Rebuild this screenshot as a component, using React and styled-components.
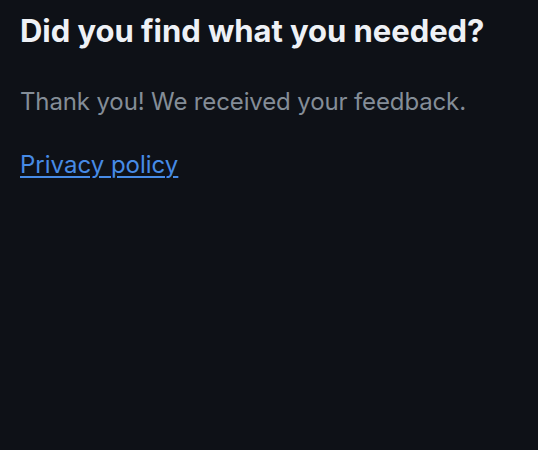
import styled, {createGlobalStyle} from 'styled-components'

const GlobalStyle = createGlobalStyle`
  html, body {
    margin: 0;
    background: #0e1117;
  }
  body {
    font-family: Inter, "Liberation Sans", sans-serif;
    -webkit-font-smoothing: antialiased;
  }
`

// Feedback panel
export default function App() {
  return (
    <>
      <GlobalStyle/>
      <Panel>
        <Title>Did you find what you needed?</Title>
        <Message>Thank you! We received your feedback.</Message>
        <Link href="#">Privacy policy</Link>
      </Panel>
    </>
  )
}

const Panel = styled.div`
  width: 538px;
  height: 450px;
  display: flex;
  padding: 12px 20px;
  box-sizing: border-box;
  flex-direction: column;
  align-items: flex-start;
  background: #0e1117;
`

const Title = styled.h3`
  margin: 0;
  color: #eef1f6;
  font-size: 31px;
  font-weight: 700;
  line-height: 38px;
  letter-spacing: -0.05px;
`

const Message = styled.p`
  margin: 37px 0 0;
  color: #848d97;
  font-size: 24px;
  line-height: 30px;
  letter-spacing: -0.13px;
`

const Link = styled.a`
  margin-top: 33px;
  color: #478be6;
  font-size: 24px;
  line-height: 30px;
  text-decoration: underline;
  text-decoration-thickness: 2px;
  text-underline-offset: 3px;
`
